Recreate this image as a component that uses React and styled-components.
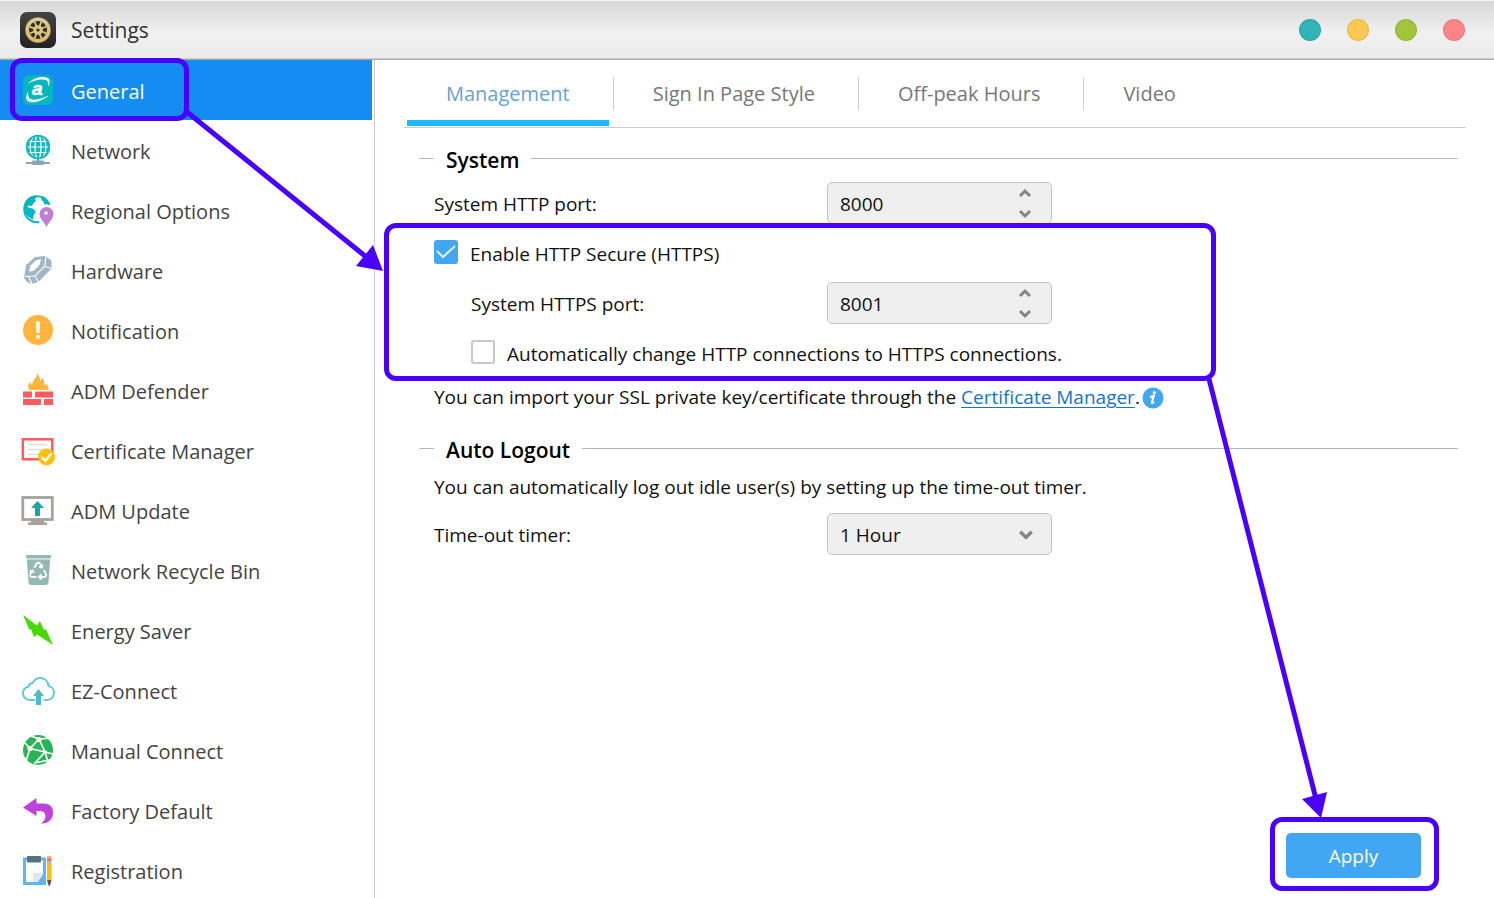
import React, { useState } from "react";
import styled, { createGlobalStyle } from "styled-components";

const GlobalStyle = createGlobalStyle`
  * {
    box-sizing: border-box;
  }
  body {
    margin: 0;
    background: #fff;
    font-family: "Open Sans", "Noto Sans", sans-serif;
  }
  button, input, select {
    font-family: inherit;
  }
`;

const MARK = "#4a00ff";

const Page = styled.div`
  position: relative;
  display: flex;
  flex-direction: column;
  height: 100vh;
  overflow: hidden;
`;

const TitleBar = styled.header`
  display: flex;
  align-items: center;
  flex: none;
  gap: 15px;
  height: 60px;
  padding: 0 29px 0 20px;
  border-top: 1px solid #f4f4f4;
  border-bottom: 1px solid #a9a9a9;
  background: linear-gradient(#d6d6d6, #f1f1f1 55%, #ebebeb);
  box-shadow: inset 0 -1px 0 #cbcbcb;
`;

const Title = styled.h1`
  flex: 1;
  margin: 0;
  font-size: 21px;
  font-weight: 400;
  line-height: 30px;
  color: #333;
`;

const WindowButtons = styled.div`
  display: flex;
  gap: 26px;
`;

const WindowButton = styled.button`
  width: 22px;
  height: 22px;
  padding: 0;
  border: 0;
  border-radius: 50%;
  background: ${(props) => props.$color};
  box-shadow: inset 0 0 1px 1px rgba(0, 0, 0, 0.08);
  cursor: pointer;
`;

const Body = styled.div`
  display: flex;
  flex: 1;
  min-height: 0;
`;

const Sidebar = styled.nav`
  flex: none;
  width: 375px;
  padding-right: 2px;
  border-right: 1px solid #c9ccd6;
`;

const SidebarItem = styled.a`
  position: relative;
  display: flex;
  align-items: center;
  gap: 16px;
  height: 60px;
  padding: 4px 0 0 21px;
  font-size: 20px;
  line-height: 30px;
  text-decoration: none;
  color: ${(props) => (props.$active ? "#fff" : "#444")};
  background: ${(props) => (props.$active ? "#148cf1" : "transparent")};
  svg {
    flex: none;
    margin-bottom: 4px;
  }
`;

const Main = styled.main`
  display: flex;
  flex-direction: column;
  flex: 1;
  min-width: 0;
  padding: 0 28px 0 29px;
`;

const Tabs = styled.div`
  display: flex;
  flex: none;
  height: 68px;
  padding-left: 3px;
  border-bottom: 1px solid #cccdd4;
`;

const Tab = styled.button`
  position: relative;
  height: 66px;
  margin-right: 5px;
  padding: 8px 39px 0;
  border: 0;
  border-bottom: 6px solid
    ${(props) => (props.$active ? "#1cb9ff" : "transparent")};
  background: none;
  font-size: 20px;
  line-height: 30px;
  color: ${(props) => (props.$active ? "#64a5cb" : "#777")};
  cursor: pointer;
  &:not(:last-child)::after {
    content: "";
    position: absolute;
    top: 17px;
    right: -5px;
    width: 1px;
    height: 33px;
    background: #cccdd4;
  }
`;

const Section = styled.section`
  padding: 0 8px 0 15px;
`;

const SectionTitle = styled.h2`
  display: flex;
  align-items: center;
  gap: 12px;
  margin: 0;
  font-size: 21px;
  font-weight: 600;
  line-height: 30px;
  color: #000;
  &::before,
  &::after {
    content: "";
    width: 15px;
    height: 1px;
    margin-bottom: 4px;
    background: #b4b4cc;
  }
  &::after {
    flex: 1;
  }
`;

const SystemSection = styled(Section)`
  padding-top: 17px;
`;

const LogoutSection = styled(Section)`
  padding-top: 18px;
`;

const Row = styled.div`
  display: flex;
  align-items: center;
  height: ${(props) => props.$height || 50}px;
  padding-left: ${(props) => (props.$indent ? 52 : 15)}px;
  font-size: 19px;
  line-height: 28px;
  color: #111;
`;

const FieldLabel = styled.label`
  width: ${(props) => (props.$indent ? 356 : 393)}px;
  padding-top: 2px;
`;

const CheckLabel = styled.label`
  display: flex;
  align-items: center;
  gap: 12px;
  padding-top: 2px;
`;

const Checkbox = styled.input`
  appearance: none;
  width: 24px;
  height: 24px;
  margin: 0 0 4px;
  border: 2px solid #c6c8cc;
  border-radius: 3px;
  background: #fff;
  &:checked {
    border-color: #42a7f3;
    background: #42a7f3
      url("data:image/svg+xml,%3Csvg xmlns='http://www.w3.org/2000/svg' viewBox='0 0 20 20' fill='none' stroke='%23e4f3ff' stroke-width='2'%3E%3Cpath d='M1 9l6 6L19 4'/%3E%3C/svg%3E");
  }
`;

const FieldBox = styled.div`
  display: flex;
  align-items: center;
  width: 225px;
  height: 42px;
  padding-right: 17px;
  border: 1px solid #c3c3c3;
  border-radius: 5px;
  background: #efefef;
`;

const NumberInput = styled.input`
  flex: 1;
  min-width: 0;
  height: 40px;
  padding: 2px 12px 0;
  border: 0;
  outline: 0;
  background: none;
  font-size: 19px;
  color: #111;
`;

const Spinner = styled.div`
  display: flex;
  flex-direction: column;
  gap: 4px;
`;

const SpinnerButton = styled.button`
  display: flex;
  align-items: center;
  justify-content: center;
  width: 18px;
  height: 16px;
  padding: 0;
  border: 0;
  background: none;
  color: #858585;
  cursor: pointer;
`;

const Select = styled.select`
  appearance: none;
  flex: 1;
  height: 40px;
  padding: 2px 12px 0;
  border: 0;
  outline: 0;
  background: none;
  font-size: 19px;
  color: #111;
`;

const HttpsGroup = styled.div`
  position: relative;
`;

const Link = styled.a`
  color: #1474cc;
  text-decoration: underline;
  text-underline-offset: 3px;
  text-decoration-thickness: 1px;
`;

const Hint = styled.p`
  display: flex;
  align-items: center;
  height: 42px;
  margin: 0;
  padding: 2px 15px 0;
  font-size: 19px;
  line-height: 28px;
  color: #111;
  white-space: pre-wrap;
  svg {
    margin: 2px 0 0 2px;
  }
`;

const Footer = styled.footer`
  display: flex;
  justify-content: flex-end;
  margin-top: auto;
  padding: 0 45px 20px;
`;

const ApplyWrap = styled.div`
  position: relative;
`;

const ApplyButton = styled.button`
  display: block;
  width: 135px;
  height: 45px;
  padding: 0;
  border: 0;
  border-radius: 5px;
  background: #42a7f3;
  font-size: 19px;
  line-height: 28px;
  color: #fff;
  cursor: pointer;
`;

const Outline = styled.span`
  position: absolute;
  z-index: 2;
  inset: ${(props) => props.$inset};
  border: 5px solid ${MARK};
  border-radius: 12px;
  pointer-events: none;
`;

const Arrows = styled.svg`
  position: absolute;
  top: 0;
  left: 0;
  z-index: 3;
  pointer-events: none;
`;

const Icon = ({ children }) => (
  <svg width="34" height="34" viewBox="0 0 34 34" fill="none" aria-hidden="true">
    {children}
  </svg>
);

const AppIcon = () => (
  <svg width="36" height="36" viewBox="0 0 36 36" fill="none" aria-hidden="true">
    <defs>
      <linearGradient id="tile" x1="0" y1="0" x2="0" y2="1">
        <stop offset="0" stopColor="#444" />
        <stop offset="1" stopColor="#222" />
      </linearGradient>
      <linearGradient id="gold" x1="0" y1="0" x2="0" y2="1">
        <stop offset="0" stopColor="#d8cfa0" />
        <stop offset="1" stopColor="#e0b862" />
      </linearGradient>
    </defs>
    <rect width="36" height="36" rx="7" fill="url(#tile)" />
    <circle cx="18" cy="18" r="13" fill="#8b7a48" />
    <circle cx="18" cy="18" r="12.300" fill="url(#gold)" />
    <circle cx="18" cy="18" r="9" fill="#302b1e" />
    <g stroke="#ddc582" strokeWidth="1.800" transform="rotate(22.500 18 18)">
      <path d="M18 9v18M9 18h18M11.600 11.600l12.800 12.800M24.400 11.600L11.600 24.400" />
    </g>
    <circle cx="18" cy="18" r="4.800" fill="#ddc582" />
    <circle cx="18" cy="18" r="1.600" fill="#302b1e" />
  </svg>
);

const GeneralIcon = () => (
  <Icon>
    <rect x="2" y="2" width="30" height="30" rx="6" fill="#05b7bf" />
    <path
      d="M6.500 11C12 5 21 2.500 26.500 5c3 1.600 2.500 5.500.5 8.500.6-3 .2-5.400-2-6.400C20 5.500 13 7 6.500 11z"
      fill="#fff"
    />
    <path
      d="M27.500 22.500C22 27.500 13 31 7.500 28.500 4 27 5 21.500 7.500 18.500 6.500 21.500 7 24.500 9.500 26c4 1.800 12-.5 18-3.500z"
      fill="#fff"
    />
    <text
      x="11"
      y="22"
      fill="#fff"
      stroke="#fff"
      strokeWidth=".6"
      fontFamily="Liberation Sans, sans-serif"
      fontSize="19"
      fontStyle="italic"
      fontWeight="700"
    >
      a
    </text>
  </Icon>
);

const NetworkIcon = () => (
  <Icon>
    <circle cx="17" cy="14" r="12" fill="#10b8c0" />
    <g stroke="#fff" strokeWidth="1.200">
      <ellipse cx="17" cy="14" rx="8" ry="12" />
      <ellipse cx="17" cy="14" rx="3" ry="12" />
      <path d="M5 14h24M7 8.500h20M7 19.500h20" />
    </g>
    <circle cx="17" cy="14" r="11.300" stroke="#10b8c0" strokeWidth="1.800" />
    <path d="M16 26h2v3h-2z" fill="#10b8c0" />
    <path d="M5 29h24v2H5z" fill="#8fa3b3" />
    <rect x="11" y="27.500" width="12" height="4.500" rx="1" fill="#8fa3b3" />
  </Icon>
);

const RegionIcon = () => (
  <Icon>
    <path
      d="M28.500 12A13 13 0 1 0 18 29.200"
      stroke="#05b7bf"
      strokeWidth="2"
    />
    <path
      d="M4 9C7 4.500 10 3 14 2.500c2 .8 2 1.800.6 2.700-1.400.6-.6 2 .6 2.400-1 1.800-3 2-3.600 4.400-.8 1.200-2.400 1-3.600.6-1.400-.2-1.800 1.400-.6 2 1.800.6 4 .6 5.400 1.800 2.200 1.400 2.200 3 .6 4.600-1.400 1.400-1 3.600-1.600 5.400C7 24.500 3 20 3 15z"
      fill="#05b7bf"
    />
    <path
      d="M20 3c4 .5 6.500 3 8.500 8l-3 .6c-.8-1-1.800-.6-2.200.4-1-1.400.2-2.800-1-3.800-1.800-.6-2.200-1.200-2-2.400.2-1 .2-1.800-.3-2.800z"
      fill="#05b7bf"
    />
    <path
      d="M25.500 34c-1.500-4.200-7-8-7-13a7 7 0 0 1 14 0c0 5-5.500 8.800-7 13z"
      fill="#c07dd6"
    />
    <circle cx="25" cy="20" r="1.700" fill="#fff" />
  </Icon>
);

const HardwareIcon = () => (
  <Icon>
    <path
      d="M3.500 22L5 12 14 4l10-1 6.500 4.500v8L17.500 29l-7 2-4.500-2-3-4z"
      fill="#a3b6c8"
    />
    <path d="M8 18.500l1.500-6 6-5.500 4.500-.5-1.500 5.500-6 6z" fill="#fff" />
    <path
      d="M4 23.500l10-.5 9.500-9.500L25 3.500M14 23l4 6.500M23.500 13.500l7.500 2M7.500 23.300l3.500 8"
      stroke="#fff"
      strokeWidth="1.200"
    />
  </Icon>
);

const NotificationIcon = () => (
  <Icon>
    <circle cx="17" cy="17" r="15" fill="#ffb43b" />
    <path d="M14.800 8.500h4.400l-.8 11.500h-2.800z" fill="#fff" />
    <circle cx="17" cy="23.800" r="2" fill="#fff" />
  </Icon>
);

const DefenderIcon = () => (
  <Icon>
    <path
      d="M8.500 17C6 13.500 7.500 10.500 9.500 9c.2 1.600.6 2.400 1.600 2.800C11.500 6.500 16 5 16.200.500 19 3 18.600 6 19.500 8.200c.8-.9 1.200-2.400 1-3.700 3 2.500 3 5.500 2.800 8 .9-.2 1.600-.9 1.900-2 1.800 2.200 2.500 4 2.300 6.500z"
      fill="#ffb43b"
    />
    <path d="M2 18.500h9v6H2zM14 18.500h18v6H14zM2 26h18v6H2zM23 26h9v6h-9z" fill="#ff5b5f" />
  </Icon>
);

const CertificateIcon = () => (
  <Icon>
    <rect x="1.800" y="6.300" width="29.500" height="20" stroke="#ff5b5f" strokeWidth="2.500" />
    <path d="M7 11.500h19M7 16.500h19M7 21.500h12" stroke="#ddd" strokeWidth="1.500" />
    <circle cx="25.500" cy="24" r="8.500" fill="#ffbf0b" />
    <path d="M20.500 24l3.800 4 6-7.500" stroke="#fff" strokeWidth="2.400" />
  </Icon>
);

const UpdateIcon = () => (
  <Icon>
    <rect x="1.800" y="4.500" width="29.500" height="22" stroke="#a8a29d" strokeWidth="2.800" />
    <path d="M10 27h13v3H10zM7 29.500h19V32H7z" fill="#a8a29d" />
    <path d="M16.500 8l6.500 7h-4v8h-5v-8h-4z" fill="#17a5a8" />
  </Icon>
);

const RecycleIcon = () => (
  <Icon>
    <rect x="5" y="2" width="25" height="3.500" rx="1" fill="#93b9b5" />
    <path d="M5.800 6.500h23.400L27.500 29a3 3 0 0 1-3 3h-14a3 3 0 0 1-3-3z" fill="#93b9b5" />
    <g stroke="#fff" strokeWidth="1.800" strokeLinejoin="round">
      <path d="M13.200 14.800l2.500-4.300c.6-1 2.600-1 3.200 0l2 3.500M21.500 11.500l-.5 3-3-.6" />
      <path d="M22.800 17l2 3.500c.8 1.500 0 3.500-1.800 3.500h-4.500M20.500 21.500L18 24l2.500 2.500" />
      <path d="M15.500 24H11c-1.600 0-2.400-1.800-1.600-3.200l2-3.600M8.800 18.500l2.700-1.300 1.300 2.700" />
    </g>
  </Icon>
);

const EnergyIcon = () => (
  <Icon>
    <path
      d="M2 2l14 10.500L18.800 8l4.400 9 1.600-1L32 32 16 21.500 13 24l-3-8-1.500 1z"
      fill="#47d900"
    />
  </Icon>
);

const CloudIcon = () => (
  <Icon>
    <path
      d="M14 27H8.500a6.800 6.800 0 0 1-.8-13.500c.6-2.600 2.400-3.500 3.800-3.200C13 7 16.200 5 19.500 5c4.500 0 8 3.600 8 8 3.500.6 5.500 3.600 5.500 6.800 0 4-3 7.200-7 7.200h-3.500"
      stroke="#68c9cf"
      strokeWidth="2"
    />
    <path d="M17.500 16l5.500 7h-3v9h-5v-9h-3z" fill="#4dbcc4" />
  </Icon>
);

const ManualIcon = () => (
  <Icon>
    <circle cx="17" cy="17" r="15" fill="#27b556" />
    <path
      d="M9 15.500L18 6l14-1M9 15.500L3 9M9 15.500l15 3.500M18 6l6 13M24 19l-10 11M24 19l8 2M9 15.500L5 28M18 6l-8-3M13 30l16-3M24 19l3 10"
      stroke="#fff"
      strokeWidth="1.700"
    />
    <g fill="#fff">
      <circle cx="9" cy="15.500" r="2.600" />
      <circle cx="18" cy="6.500" r="2.600" />
      <circle cx="24" cy="19" r="1.800" />
    </g>
  </Icon>
);

const FactoryIcon = () => (
  <Icon>
    <path
      d="M2 14.500L15.500 5v5.500H23c6 0 9 3.500 9 9C32 26.500 27 31 19.500 30.500c6-2.500 7.500-12.500-1-12.500h-3v5z"
      fill="#be42db"
    />
  </Icon>
);

const RegistrationIcon = () => (
  <Icon>
    <rect x="3.500" y="6" width="20" height="24.500" fill="#fff" stroke="#5ab5ff" strokeWidth="3" />
    <path d="M12 20h10l-5 9h-5z" fill="#e6e6e6" />
    <path d="M17 29l5.500-8.500V29z" fill="#5ab5ff" />
    <rect x="6" y="3" width="14" height="6.500" rx="1" fill="#56707c" />
    <path d="M26 10h4.500v17H26z" fill="#ffbd0f" />
    <path d="M26 8h4.500v2.500H26z" fill="#b9b4d4" />
    <path d="M26 3h4.500v3H26z" fill="#ffb43b" />
    <path d="M26 5.500h4.500V8H26z" fill="#e8736d" />
    <path d="M26 27h4.500l-1 4-1.200 2.500L27 31z" fill="#6e5242" />
  </Icon>
);

const InfoIcon = () => (
  <svg width="22" height="22" viewBox="0 0 22 22" fill="none" aria-hidden="true">
    <circle cx="11" cy="11" r="10.500" fill="#42a7f3" />
    <circle cx="12.300" cy="5.700" r="1.600" fill="#fff" />
    <path
      d="M8 10l3.800-1.200-2 6.800c-.2 1 .8.800 2.200-.8"
      stroke="#fff"
      strokeWidth="2"
    />
  </svg>
);

const Chevron = ({ up, size = 14 }) => (
  <svg width={size} height={size} viewBox="0 0 14 14" fill="none" aria-hidden="true">
    <path
      d={up ? "M2 10l5-5 5 5" : "M2 5l5 5 5-5"}
      stroke="#858585"
      strokeWidth="3"
    />
  </svg>
);

const menu = [
  { label: "General", icon: GeneralIcon },
  { label: "Network", icon: NetworkIcon },
  { label: "Regional Options", icon: RegionIcon },
  { label: "Hardware", icon: HardwareIcon },
  { label: "Notification", icon: NotificationIcon },
  { label: "ADM Defender", icon: DefenderIcon },
  { label: "Certificate Manager", icon: CertificateIcon },
  { label: "ADM Update", icon: UpdateIcon },
  { label: "Network Recycle Bin", icon: RecycleIcon },
  { label: "Energy Saver", icon: EnergyIcon },
  { label: "EZ-Connect", icon: CloudIcon },
  { label: "Manual Connect", icon: ManualIcon },
  { label: "Factory Default", icon: FactoryIcon },
  { label: "Registration", icon: RegistrationIcon },
];

const tabs = ["Management", "Sign In Page Style", "Off-peak Hours", "Video"];

const windowButtons = [
  { label: "Help", color: "#31b3b8" },
  { label: "Minimize", color: "#fcc852" },
  { label: "Maximize", color: "#a4c43c" },
  { label: "Close", color: "#fd8585" },
];

const PortField = ({ id, value, onChange }) => (
  <FieldBox>
    <NumberInput
      id={id}
      inputMode="numeric"
      value={value}
      onChange={(e) => onChange(Number(e.target.value) || 0)}
    />
    <Spinner>
      <SpinnerButton aria-label="Increase" onClick={() => onChange(value + 1)}>
        <Chevron up />
      </SpinnerButton>
      <SpinnerButton aria-label="Decrease" onClick={() => onChange(value - 1)}>
        <Chevron />
      </SpinnerButton>
    </Spinner>
  </FieldBox>
);

const App = () => {
  const [tab, setTab] = useState("Management");
  const [httpPort, setHttpPort] = useState(8000);
  const [httpsPort, setHttpsPort] = useState(8001);
  const [secure, setSecure] = useState(true);
  const [redirect, setRedirect] = useState(false);
  const [timer, setTimer] = useState("1 Hour");

  return (
    <Page>
      <GlobalStyle />
      <TitleBar>
        <AppIcon />
        <Title>Settings</Title>
        <WindowButtons>
          {windowButtons.map((item) => (
            <WindowButton key={item.label} aria-label={item.label} $color={item.color} />
          ))}
        </WindowButtons>
      </TitleBar>
      <Body>
        <Sidebar>
          {menu.map(({ label, icon: ItemIcon }, index) => (
            <SidebarItem key={label} href="#" $active={index === 0}>
              <ItemIcon />
              {label}
              {index === 0 && <Outline $inset="-2px 183px -1px 10px" />}
            </SidebarItem>
          ))}
        </Sidebar>
        <Main>
          <Tabs>
            {tabs.map((name) => (
              <Tab key={name} $active={name === tab} onClick={() => setTab(name)}>
                {name}
              </Tab>
            ))}
          </Tabs>
          <SystemSection>
            <SectionTitle>System</SectionTitle>
            <Row $height={56}>
              <FieldLabel htmlFor="http-port">System HTTP port:</FieldLabel>
              <PortField id="http-port" value={httpPort} onChange={setHttpPort} />
            </Row>
            <HttpsGroup>
              <Row $height={44}>
                <CheckLabel>
                  <Checkbox
                    type="checkbox"
                    checked={secure}
                    onChange={(e) => setSecure(e.target.checked)}
                  />
                  Enable HTTP Secure (HTTPS)
                </CheckLabel>
              </Row>
              <Row $indent $height={56}>
                <FieldLabel $indent htmlFor="https-port">
                  System HTTPS port:
                </FieldLabel>
                <PortField id="https-port" value={httpsPort} onChange={setHttpsPort} />
              </Row>
              <Row $indent $height={44}>
                <CheckLabel>
                  <Checkbox
                    type="checkbox"
                    checked={redirect}
                    onChange={(e) => setRedirect(e.target.checked)}
                  />
                  Automatically change HTTP connections to HTTPS connections.
                </CheckLabel>
              </Row>
              <Outline $inset="-8px 242px -6px -35px" />
            </HttpsGroup>
            <Hint>
              You can import your SSL private key/certificate through the{" "}
              <Link href="#">Certificate Manager</Link>.<InfoIcon />
            </Hint>
          </SystemSection>
          <LogoutSection>
            <SectionTitle>Auto Logout</SectionTitle>
            <Hint>
              You can automatically log out idle user(s) by setting up the time-out timer.
            </Hint>
            <Row $height={54}>
              <FieldLabel htmlFor="timer">Time-out timer:</FieldLabel>
              <FieldBox>
                <Select id="timer" value={timer} onChange={(e) => setTimer(e.target.value)}>
                  <option>30 Minutes</option>
                  <option>1 Hour</option>
                  <option>2 Hours</option>
                </Select>
                <Chevron size={16} />
              </FieldBox>
            </Row>
          </LogoutSection>
          <Footer>
            <ApplyWrap>
              <ApplyButton>Apply</ApplyButton>
              <Outline $inset="-16px -18px -13px -16px" />
            </ApplyWrap>
          </Footer>
        </Main>
      </Body>
      <Arrows width="1494" height="898" viewBox="0 0 1494 898" fill={MARK} aria-hidden="true">
        <path d="M187 112L365 256M1209 379L1316 799" stroke={MARK} strokeWidth="5" />
        <path d="M383 271L356 266L373 245zM1321 818L1302 799L1327 792z" />
      </Arrows>
    </Page>
  );
};

export default App;
